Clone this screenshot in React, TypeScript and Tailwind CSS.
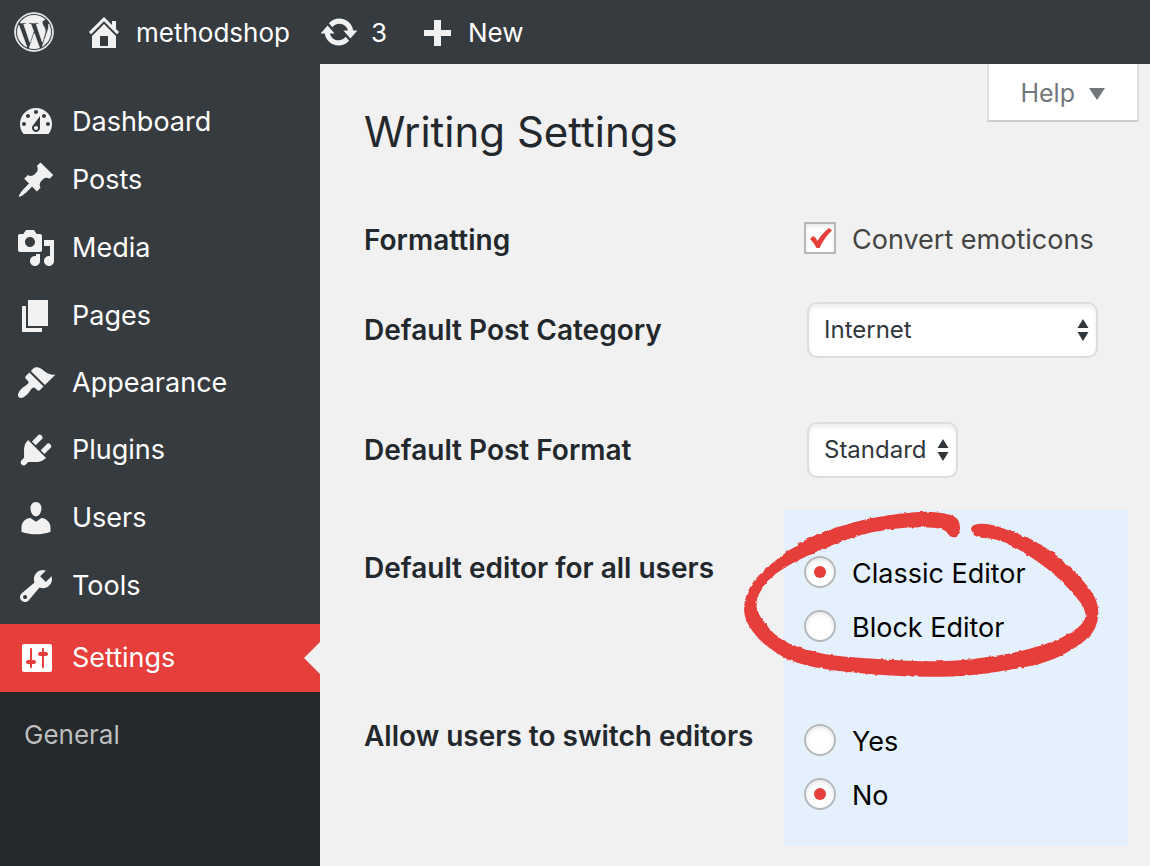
import type { ReactNode } from "react";
import { FaWordpress } from "react-icons/fa";

const icons = {
  home: "M16 8.5l1.53 1.53-1.06 1.06L10 4.6l-6.47 6.49-1.06-1.06L10 2.5l4 4v-2h2v4zm-6-2.46l6 5.99V18H4v-5.97zM12 17v-5H8v5h4z",
  update:
    "M10.2 3.28c3.53 0 6.43 2.61 6.92 6h2.08l-3.5 4-3.5-4h2.32c-.45-1.97-2.21-3.45-4.32-3.45-1.45 0-2.73.71-3.54 1.78L4.95 5.66C6.23 4.2 8.11 3.28 10.2 3.28zm-.4 13.44c-3.52 0-6.43-2.61-6.92-6H.8l3.5-4c1.17 1.33 2.33 2.67 3.5 4H5.48c.45 1.97 2.21 3.45 4.32 3.45 1.45 0 2.73-.71 3.54-1.78l1.71 1.95c-1.28 1.46-3.15 2.38-5.25 2.38z",
  plus: "M17.500 9v3h-5v5H9v-5H4V9h5V4h3.500v5z",
  dashboard:
    "M3.76 16h12.48c1.1-1.37 1.76-3.11 1.76-5 0-4.42-3.58-8-8-8s-8 3.58-8 8c0 1.89.66 3.63 1.76 5zM10 4c.55 0 1 .45 1 1s-.45 1-1 1-1-.45-1-1 .45-1 1-1zM6 6c.55 0 1 .45 1 1s-.45 1-1 1-1-.45-1-1 .45-1 1-1zm8 0c.55 0 1 .45 1 1s-.45 1-1 1-1-.45-1-1 .45-1 1-1zm-5.37 5.55L12 7v6c0 1.1-.9 2-2 2s-2-.9-2-2c0-.57.24-1.08.63-1.45zM4 10c.55 0 1 .45 1 1s-.45 1-1 1-1-.45-1-1 .45-1 1-1zm12 0c.55 0 1 .45 1 1s-.45 1-1 1-1-.45-1-1 .45-1 1-1zm-5 3c0-.55-.45-1-1-1s-1 .45-1 1 .45 1 1 1 1-.45 1-1z",
  posts:
    "M10.44 3.02l1.82-1.82 6.36 6.35-1.83 1.82c-1.05-.68-2.48-.57-3.41.36l-.75.75c-.92.93-1.04 2.35-.35 3.41l-1.83 1.82-2.41-2.41-2.8 2.79c-.42.42-3.38 2.71-3.8 2.29s1.86-3.39 2.28-3.81l2.79-2.79L4.1 9.36l1.83-1.82c1.05.69 2.48.57 3.4-.36l.75-.75c.93-.92 1.05-2.35.36-3.41z",
  media:
    "M13 11V4c0-.55-.45-1-1-1h-1.67L9 1H5L3.67 3H2c-.55 0-1 .45-1 1v7c0 .55.45 1 1 1h10c.55 0 1-.45 1-1zM7 4.500c1.38 0 2.5 1.12 2.5 2.5S8.38 9.5 7 9.5 4.5 8.38 4.5 7 5.62 4.5 7 4.5zM14 6h5v10.5c0 1.38-1.12 2.5-2.5 2.5S14 17.88 14 16.5s1.12-2.5 2.5-2.5c.17 0 .34.02.5.05V9h-3V6zm-4 8.05V13h2v3.5c0 1.38-1.12 2.5-2.5 2.5S7 17.88 7 16.5 8.12 14 9.5 14c.17 0 .34.02.5.05z",
  pages: "M6 15V2h10v13H6zm-1 1h8v2H3V5h2v11z",
  appearance:
    "M14.48 11.06L7.41 3.99l1.5-1.5c.5-.56 2.3-.47 3.51.32 1.21.8 1.43 1.28 2.91 2.1 1.18.64 2.45 1.26 4.45.85zm-.71.71L6.7 4.7 4.93 6.47c-.39.39-.39 1.02 0 1.41l1.06 1.06c.39.39.39 1.03 0 1.42-.6.6-1.43 1.11-2.21 1.69-.35.26-.7.53-1.01.84C1.43 14.23.4 16.08 1.4 17.07c.99 1 2.84-.03 4.18-1.36.31-.31.58-.66.85-1.02.57-.78 1.08-1.61 1.69-2.21.39-.39 1.02-.39 1.41 0l1.06 1.06c.39.39 1.02.39 1.41 0z",
  plugins:
    "M13.11 4.36L9.87 7.6 8 5.73l3.24-3.24c.35-.34 1.05-.2 1.56.32.52.51.66 1.21.31 1.55zm-8 1.77l.91-1.12 9.01 9.01-1.19.84c-.71.71-2.63 1.16-3.82 1.16H6.14L4.9 17.26c-.59.59-1.54.59-2.12 0-.59-.58-.59-1.53 0-2.12l1.24-1.24v-3.88c0-1.13.4-3.19 1.09-3.89zm7.26 3.97l3.24-3.24c.34-.35 1.04-.21 1.55.31.52.51.66 1.21.31 1.55l-3.24 3.25z",
  users:
    "M10 9.25c-2.27 0-2.73-3.44-2.73-3.44C7 4.02 7.82 2 9.97 2c2.16 0 2.98 2.02 2.71 3.81 0 0-.41 3.44-2.68 3.44zm0 2.57L12.72 10c2.39 0 4.52 2.33 4.52 4.53v2.49s-3.65 1.13-7.24 1.13c-3.65 0-7.24-1.13-7.24-1.13v-2.49c0-2.25 1.94-4.48 4.47-4.48z",
  tools:
    "M16.68 9.77c-1.34 1.34-3.3 1.67-4.95.99l-5.41 6.52c-.99.99-2.59.99-3.58 0s-.99-2.59 0-3.57l6.52-5.42c-.68-1.65-.35-3.61.99-4.95 1.28-1.28 3.12-1.62 4.72-1.06l-2.89 2.89 2.82 2.82 2.86-2.87c.53 1.58.18 3.39-1.08 4.65zM3.81 16.21c.4.39 1.04.39 1.43 0 .4-.4.4-1.04 0-1.43-.39-.4-1.03-.4-1.43 0-.39.39-.39 1.03 0 1.43z",
  settings:
    "M18 16V4c0-.55-.45-1-1-1H4c-.55 0-1 .45-1 1v12c0 .55.45 1 1 1h13c.55 0 1-.45 1-1zM8 11h1c.55 0 1 .45 1 1s-.45 1-1 1H8v1.5c0 .28-.22.5-.5.5s-.5-.22-.5-.5V13H6c-.55 0-1-.45-1-1s.45-1 1-1h1V5.5c0-.28.22-.5.5-.5s.5.22.5.5V11zm5-2h-1c-.55 0-1-.45-1-1s.45-1 1-1h1V5.5c0-.28.22-.5.5-.5s.5.22.5.5V7h1c.55 0 1 .45 1 1s-.45 1-1 1h-1v5.5c0 .28-.22.5-.5.5s-.5-.22-.5-.5V9z",
};

type IconName = keyof typeof icons;

const Icon = ({ name }: { name: IconName }) => (
  <svg viewBox="0 0 20 20" className="h-10 w-10 shrink-0 fill-current" aria-hidden="true">
    <path d={icons[name]} fillRule="evenodd" />
  </svg>
);

const menu: { label: string; icon: IconName; spacing: string }[] = [
  { label: "Dashboard", icon: "dashboard", spacing: "h-[58px]" },
  { label: "Posts", icon: "posts", spacing: "h-[58px] mb-[5px]" },
  { label: "Media", icon: "media", spacing: "h-[68px]" },
  { label: "Pages", icon: "pages", spacing: "h-[68px]" },
  { label: "Appearance", icon: "appearance", spacing: "h-[66px]" },
  { label: "Plugins", icon: "plugins", spacing: "h-[68px]" },
  { label: "Users", icon: "users", spacing: "h-[68px]" },
  { label: "Tools", icon: "tools", spacing: "h-[68px]" },
];

const Toolbar = () => (
  <header className="flex h-16 items-center bg-[#363b3f] pl-[14px] text-[26px] text-white">
    <a href="#about" aria-label="About WordPress" className="text-[#f1f1f1]">
      <FaWordpress className="h-10 w-10 overflow-visible stroke-current stroke-[10px]" />
    </a>
    <a href="#site" className="ml-[30px] flex items-center gap-3">
      <span className="text-[#f1f1f1]"><Icon name="home" /></span>
      methodshop
    </a>
    <a href="#updates" className="ml-[29px] flex items-center gap-3">
      <span className="text-[#f1f1f1]"><Icon name="update" /></span>
      3
    </a>
    <a href="#new" className="ml-[29px] flex items-center gap-3">
      <span className="text-[#f1f1f1]"><Icon name="plus" /></span>
      New
    </a>
  </header>
);

const Sidebar = () => (
  <nav className="w-80 shrink-0 bg-[#363b3f] pt-[29px] text-[27px] text-white">
    {menu.map(({ label, icon, spacing }) => (
      <a key={label} href={`#${icon}`} className={`flex items-center gap-4 pl-4 ${spacing}`}>
        <span className="text-[#f1f1f1]"><Icon name={icon} /></span>
        {label}
      </a>
    ))}
    <a
      href="#settings"
      aria-current="page"
      className="relative mt-1 flex h-[68px] items-center gap-4 bg-[#e63e3a] pl-4"
    >
      <Icon name="settings" />
      Settings
      <span className="absolute top-[18px] right-0 border-y-16 border-r-16 border-y-transparent border-r-[#f1f1f1]" />
    </a>
    <div className="min-h-[174px] bg-[#25292c] px-6 pt-6 text-[26px] leading-[38px] text-[#bcbebf]">
      <a href="#general">General</a>
    </div>
  </nav>
);

const FormRow = ({ label, htmlFor, children }: { label: string; htmlFor: string; children: ReactNode }) => (
  <div className="grid grid-cols-[420px_1fr] items-center">
    <label htmlFor={htmlFor} className="text-[28px] font-semibold text-[#23282d]">{label}</label>
    <div className="pl-5">{children}</div>
  </div>
);

const Select = ({ id, options, width }: { id: string; options: string[]; width: string }) => (
  <div className={`relative ml-[3px] ${width}`}>
    <select
      id={id}
      className="h-14 w-full appearance-none rounded-[10px] border-2 border-[#dddddd] bg-white pl-[15px] text-[24px] text-[#32373c] shadow-[inset_0_3px_4px_rgba(0,0,0,0.07)]"
    >
      {options.map((o) => (
        <option key={o}>{o}</option>
      ))}
    </select>
    <svg viewBox="0 0 12 22" className="pointer-events-none absolute top-[17px] right-[9px] h-[22px] w-3 fill-[#32373c]">
      <path d="M6 0l5.500 9H.5zM6 22L.5 13h11z" />
    </svg>
  </div>
);

const Radio = ({ name, label, checked }: { name: string; label: string; checked?: boolean }) => (
  <label className="flex h-[54px] items-center gap-4 text-[27px] text-black">
    <input
      type="radio"
      name={name}
      defaultChecked={checked}
      className="grid h-8 w-8 shrink-0 appearance-none place-items-center rounded-full border-2 border-[#b4b9be] bg-white shadow-[inset_0_2px_4px_rgba(0,0,0,0.1)] before:h-3 before:w-3 before:rounded-full checked:before:bg-[#e63e3a]"
    />
    <span className="pt-1">{label}</span>
  </label>
);

const EditorRow = ({ legend, children }: { legend: string; children: ReactNode }) => (
  <div role="radiogroup" aria-label={legend} className="grid h-[168px] grid-cols-[420px_1fr]">
    <span className="pt-[38px] text-[28px] leading-10 font-semibold text-[#23282d]">{legend}</span>
    <div className="relative bg-[#e4f1fc] pt-[35px] pl-5">{children}</div>
  </div>
);

// Outline of the marker stroke, outer edge first, then back along the inner edge
const stroke: [number, number][] = [
  [958, 536], [960, 524], [954, 516], [938, 513], [920, 512], [880, 517], [853, 523], [813, 536], [787, 552],
  [760, 574], [748, 591], [744, 608], [747, 622], [759, 639], [777, 653], [793, 661], [820, 668], [863, 673],
  [910, 676], [953, 676], [987, 673], [1033, 665], [1053, 659], [1074, 648], [1091, 635], [1098, 620],
  [1097, 602], [1087, 586], [1073, 571], [1053, 553], [1030, 539], [1003, 529], [987, 524], [973, 525],
  [971, 531], [977, 537], [997, 538], [1020, 549], [1040, 562], [1060, 578], [1077, 597], [1085, 607],
  [1087, 618], [1080, 628], [1060, 640], [1043, 646], [1013, 654], [980, 659], [953, 662], [920, 662],
  [897, 661], [850, 658], [823, 655], [797, 648], [780, 640], [767, 628], [758, 615], [755, 605], [757, 595],
  [767, 580], [783, 567], [813, 552], [853, 536], [887, 528], [923, 526], [945, 528], [951, 537],
];

const smooth = (pts: [number, number][]) => {
  const mid = (i: number) => {
    const [a, b] = [pts[i % pts.length], pts[(i + 1) % pts.length]];
    return `${(a[0] + b[0]) / 2} ${(a[1] + b[1]) / 2}`;
  };
  return `M${mid(0)}` + pts.map((_, i) => {
    const p = pts[(i + 1) % pts.length];
    return `Q${p[0]} ${p[1]} ${mid(i + 1)}`;
  }).join("") + "Z";
};

const MarkerCircle = () => (
  <svg
    viewBox="740 505 364 176"
    className="pointer-events-none absolute -top-[5px] -left-11 h-44 w-[364px] max-w-none"
    aria-hidden="true"
  >
    <filter id="rough" x="-5%" y="-5%" width="110%" height="110%" colorInterpolationFilters="sRGB">
      <feTurbulence type="fractalNoise" baseFrequency="0.2" numOctaves="2" seed="4" />
      <feDisplacementMap in="SourceGraphic" scale="3" xChannelSelector="R" yChannelSelector="G" />
    </filter>
    <path
      d={smooth(stroke)}
      fill="#e63e3a"
      stroke="#e63e3a"
      strokeWidth="1.5"
      filter="url(#rough)"
    />
  </svg>
);

export default function App() {
  return (
    <div className="flex min-h-screen flex-col bg-[#f1f1f1] font-['Inter',sans-serif]">
      <Toolbar />
      <div className="flex flex-1">
        <Sidebar />
        <main className="min-w-0 flex-1 pr-[22px] pb-5 pl-11">
          <div className="-mr-[11px] flex h-[146px] items-start justify-between">
            <h1 className="pt-10 text-[42px] leading-[56px] text-[#23282d]">Writing Settings</h1>
            <button
              type="button"
              className="flex h-[58px] items-center gap-[14px] border-2 border-t-0 border-[#dddddd] border-b-[#cccccc] bg-white pt-[3px] pr-8 pl-[31px] text-[25px] text-[#72777c]"
            >
              Help
              <svg viewBox="0 0 16 12" className="h-3 w-4 fill-current" aria-hidden="true">
                <path d="M0 0h16L8 12z" />
              </svg>
            </button>
          </div>
          <form>
            <div className="grid grid-rows-[60px_120px_120px]">
              <FormRow label="Formatting" htmlFor="emoticons">
                <label className="flex items-start gap-4 text-[27px] leading-9 text-[#444444]">
                  <span className="relative h-8 w-8 shrink-0">
                    <input
                      id="emoticons"
                      type="checkbox"
                      defaultChecked
                      className="peer block h-8 w-8 appearance-none border-2 border-[#b4b9be] bg-white shadow-[inset_0_2px_4px_rgba(0,0,0,0.1)]"
                    />
                    <svg viewBox="0 0 32 32" className="pointer-events-none absolute inset-0 hidden h-8 w-8 peer-checked:block">
                      <path d="M6 17l3-3c2 1 3 2 4.500 5C17 13 21 9 25 6l3 2.500C23 13 19.500 18 15.500 26h-3C11 23 9 20 6 17z" fill="#e63e3a" />
                    </svg>
                  </span>
                  Convert emoticons
                </label>
              </FormRow>
              <FormRow label="Default Post Category" htmlFor="category">
                <Select id="category" options={["Internet"]} width="w-[291px]" />
              </FormRow>
              <FormRow label="Default Post Format" htmlFor="format">
                <Select id="format" options={["Standard"]} width="w-[151px]" />
              </FormRow>
            </div>
            <EditorRow legend="Default editor for all users">
              <Radio name="editor" label="Classic Editor" checked />
              <Radio name="editor" label="Block Editor" />
              <MarkerCircle />
            </EditorRow>
            <EditorRow legend="Allow users to switch editors">
              <Radio name="switch" label="Yes" />
              <Radio name="switch" label="No" checked />
            </EditorRow>
          </form>
        </main>
      </div>
    </div>
  );
}
